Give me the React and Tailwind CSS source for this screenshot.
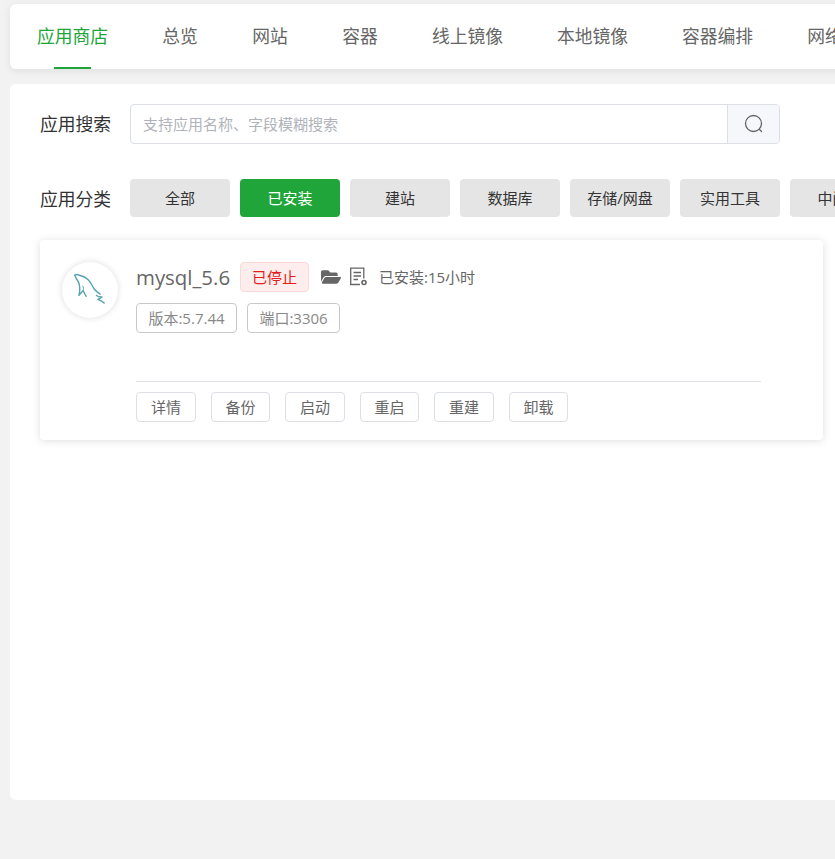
import React from "react";
import { FaFolderOpen } from "react-icons/fa";

const tabs = [["总览", "w-9"], ["网站", "w-9"], ["容器", "w-9"], ["线上镜像", "w-[71px]"], ["本地镜像", "w-[71px]"], ["容器编排", "w-[71px]"], ["网络", "w-9"]];
const cats = ["全部", "已安装", "建站", "数据库", "存储/网盘", "实用工具", "中间件"];
const acts = [["详情", "w-[60px]"], ["备份", "w-[59px]"], ["启动", "w-[60px]"], ["重启", "w-[59px]"], ["重建", "w-[60px]"], ["卸载", "w-[59px]"]];

function Dolphin() {
  return (
    <svg width="56" height="56" viewBox="0 0 56 56" fill="none" stroke="#56a3b3" strokeWidth="1.400" strokeLinejoin="round" strokeLinecap="round">
      <path d="M12.800 13.200c1.400-1.200 3-.9 4.600.1 3.300.7 6.400 2 8.800 4.500 2.700 2.800 4 6.200 6 9.200 1.500 2.200 3.700 3.700 6 5.100" />
      <path d="M12.800 13.200c.6 2.800 2.400 4.900 3.800 7 1.100 2.500 1.300 6.200 1 9.700-.2 1.700-.7 3-.6 3.500 1.100-1.600 2.500-3.300 4-4.700 1 1.500 1.700 3.600 3.200 5.500" />
      <path d="M21 28.500c1-1.500.6-3-.2-4.300" strokeWidth="1" />
      <path d="M34.500 33.500c1.500 1.200 3 1.700 5.500 1.500-1.300 1-2.800 1.800-4.200 2.300 2 .6 4.500 2 6.400 3.800" />
    </svg>
  );
}

function LogIcon() {
  return (
    <svg width="19" height="20" viewBox="0 0 19 20" fill="none" stroke="#666666">
      <path strokeWidth="1.300" d="M11 17.500H1.700V1.200h13.100v10.300" />
      <path strokeWidth="1.300" d="M4.500 5.500h7.500M4.500 9h7.500M4.500 12.500h4.500" />
      <circle cx="15" cy="15.500" r="2" strokeWidth="1.600" />
    </svg>
  );
}

export default function App() {
  return (
    <div className="h-[859px] w-[835px] overflow-hidden bg-[#f2f2f2] pt-1 pl-[10px] font-['Open_Sans','Noto_Sans_CJK_SC',sans-serif]">
      <div className="flex h-[65px] w-[900px] items-start rounded-l-md bg-white pl-[27px] shadow-[0_2px_8px_rgba(0,0,0,0.08)]">
        <div className="relative flex h-[65px] w-[71px] shrink-0 items-center justify-center whitespace-nowrap text-[17.800px] text-[#20a53a]">
          应用商店
          <span className="absolute bottom-0 left-[17px] h-0.5 w-[37px] bg-[#20a53a]" />
        </div>
        {tabs.map(([t, w]) => (
          <div key={t} className={`ml-[54px] flex h-[65px] shrink-0 items-center justify-center whitespace-nowrap text-[17.800px] text-[#666666] ${w}`}>{t}</div>
        ))}
      </div>

      <div className="mt-[15px] h-[716px] w-[900px] rounded-l-md bg-white pt-5 pl-[30px]">
        <div className="flex items-center">
          <div className="w-[90px] text-[17.800px] text-[#333333]">应用搜索</div>
          <div className="flex h-10 w-[650px] overflow-hidden rounded border border-[#dcdfe6]">
            <div className="flex flex-1 items-center px-3 text-[15px] text-[#b0b3ba]">支持应用名称、字段模糊搜索</div>
            <div className="flex w-[52px] items-center justify-center border-l border-[#dcdfe6] bg-[#f5f7fa]">
              <svg width="20" height="20" viewBox="0 0 20 20" fill="none" stroke="#666666" strokeWidth="1.300" strokeLinecap="round">
                <circle cx="9.500" cy="9.500" r="8" />
                <path d="M15.500 15.500l2 2" />
              </svg>
            </div>
          </div>
        </div>

        <div className="mt-[35px] flex items-center">
          <div className="w-[90px] shrink-0 pt-0.5 text-[17.800px] text-[#333333]">应用分类</div>
          <div className="flex gap-2.5">
            {cats.map((c) => (
              <div key={c} className={`flex h-[38px] w-[100px] shrink-0 items-center justify-center rounded-sm text-[15px] ${c === "已安装" ? "bg-[#20a53a] text-white" : "bg-[#e5e5e5] text-[#333333]"}`}>{c}</div>
            ))}
          </div>
        </div>

        <div className="mt-[23px] flex h-[200px] w-[783px] rounded bg-white pt-[22px] pl-[22px] shadow-[0_1px_8px_rgba(0,0,0,0.13)]">
          <div className="h-14 w-14 shrink-0 rounded-full bg-white shadow-[0_0_6px_rgba(0,0,0,0.14)]">
            <Dolphin />
          </div>
          <div className="ml-[18px] w-[625px]">
            <div className="flex h-[30px] items-center">
              <span className="w-[94px] whitespace-nowrap text-[20.400px] text-[#666666]">mysql_5.6</span>
              <span className="ml-[10px] flex h-[30px] w-[69px] items-center justify-center rounded border border-[#fbd9d9] bg-[#fdeded] text-[15px] text-[#e41c1c]">已停止</span>
              <FaFolderOpen className="ml-3 text-xl text-[#666666]" />
              <span className="ml-2 flex"><LogIcon /></span>
              <span className="ml-[11px] text-[15px] text-[#666666]">已安装:15小时</span>
            </div>
            <div className="mt-[11px] flex gap-2.5">
              <span className="flex h-[30px] w-[101px] items-center justify-center rounded border border-[#c9c9c9] text-[15px] text-[#888888]">版本:5.7.44</span>
              <span className="flex h-[30px] w-[93px] items-center justify-center rounded border border-[#c9c9c9] text-[15px] text-[#888888]">端口:3306</span>
            </div>
            <div className="mt-[48px] border-t border-[#e0e0e6] pt-2.5">
              <div className="flex gap-[15px]">
                {acts.map(([a, w]) => (
                  <div key={a} className={`flex h-[30px] items-center justify-center rounded border border-[#dcdfe6] text-[15px] text-[#666666] ${w}`}>{a}</div>
                ))}
              </div>
            </div>
          </div>
        </div>
      </div>
    </div>
  );
}
